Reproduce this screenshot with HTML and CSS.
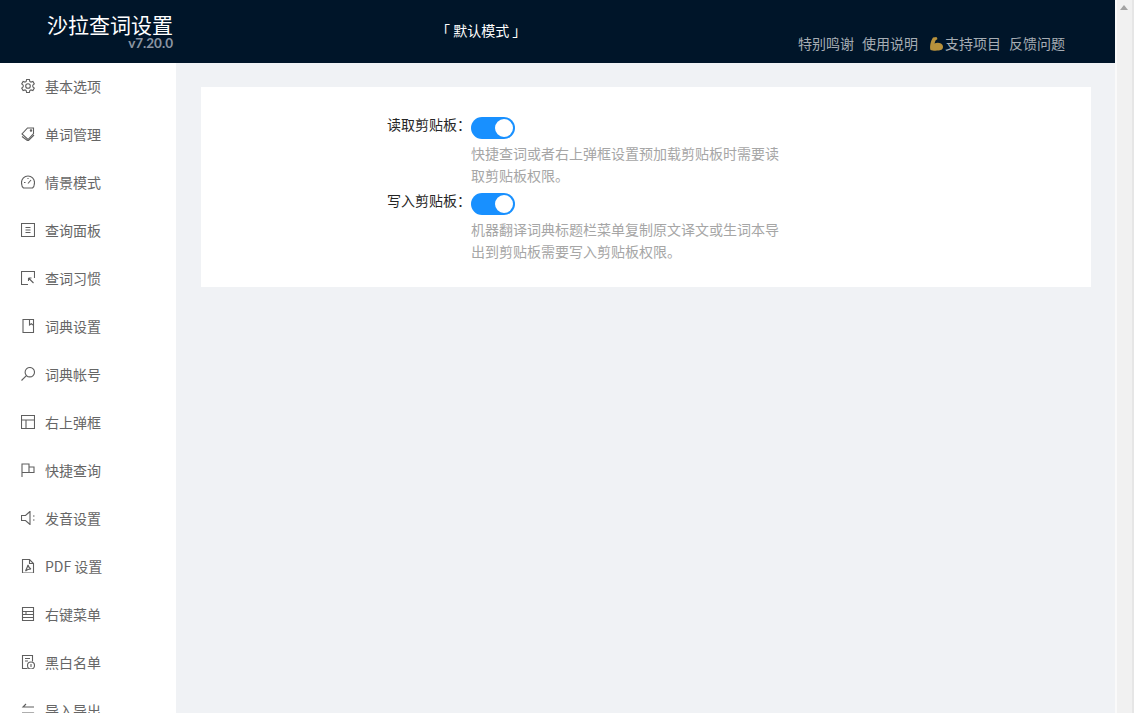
FILE: index.html
```html
<!DOCTYPE html>
<html lang="zh-CN">
<head>
<meta charset="UTF-8">
<title>沙拉查词设置</title>
<link rel="stylesheet" href="styles.css">
</head>
<body>

<div class="page">
    <header class="topbar">
        <div class="brand">
            <div class="brand-title">沙拉查词设置</div>
            <div class="brand-version">v7.20.0</div>
        </div>
        <div class="mode">「 默认模式 」</div>
        <nav class="toplinks">
            <a>特别鸣谢</a>
            <a>使用说明</a>
            <a class="support"><svg class="arm" viewBox="0 0 16 16"><path d="M5 1.500 8.500 1 9.500 3 7.500 4.500 6.500 7.500C8 6.500 11 6.300 13 7.500 15.500 9 15.500 12 14 13.500 11 15 5 15 2.500 14 1.500 11 2.500 5 5 1.500Z"/></svg>支持项目</a>
            <a>反馈问题</a>
        </nav>
    </header>

    <div class="body">
        <!-- Left menu -->
        <aside class="sidebar">
            <a class="menu-item"><svg viewBox="1 1 14 14"><path d="M6.600 1.500h2.800l.4 1.900 1.200.7 1.900-.6 1.400 2.400-1.500 1.300v1.600l1.500 1.300-1.400 2.400-1.900-.6-1.200.7-.4 1.900H6.600l-.4-1.900-1.200-.7-1.900.6-1.400-2.400 1.500-1.300V7.200L1.700 5.900l1.400-2.400 1.900.6 1.200-.7z"/><circle cx="8" cy="8" r="2.300"/></svg>基本选项</a>
            <a class="menu-item"><svg viewBox="1 1 14 14"><path d="M7.500 2h6v5.500L8 13.500l-6-5.500z"/><path d="M2 10.500 8 15l6-6"/><circle cx="11" cy="4.500" r=".7"/></svg>单词管理</a>
            <a class="menu-item"><svg viewBox="1 1 14 14"><path d="M3.500 14C2 12.800 1.500 10.500 1.500 8.500a6.500 6.500 0 0 1 13 0c0 2-.5 4.300-2 5.500z"/><path d="M8 9.500l3-3.500"/><path d="M4 8.500h1.500M8 4v1"/></svg>情景模式</a>
            <a class="menu-item"><svg viewBox="1 1 14 14"><path d="M1.500 1.500h13v13h-13z"/><path d="M5.500 5.500h5M5.500 8h5M5.500 10.500h5"/></svg>查询面板</a>
            <a class="menu-item"><svg viewBox="1 1 14 14"><path d="M8 14.500H1.500v-13h13V8"/><path d="M8.500 8l5 5M8.500 8h3M8.500 8v3"/></svg>查词习惯</a>
            <a class="menu-item"><svg viewBox="1 1 14 14"><path d="M3 1.500h10.500v13H3z"/><path d="M9.500 1.500v5.500l1.800-1.300 1.700 1.300"/></svg>词典设置</a>
            <a class="menu-item"><svg viewBox="1 1 14 14"><circle cx="9.800" cy="6.200" r="4.700"/><path d="M6.400 9.600 1.500 14.500"/></svg>词典帐号</a>
            <a class="menu-item"><svg viewBox="1 1 14 14"><path d="M1.500 1.500h13v13h-13z"/><path d="M1.500 6h13M6 6v8.500"/></svg>右上弹框</a>
            <a class="menu-item"><svg viewBox="1 1 14 14"><path d="M2 15V2h7v8.500H2"/><path d="M9 5h5v5.500H9"/></svg>快捷查询</a>
            <a class="menu-item"><svg viewBox="1 1 14 14"><path d="M10 1.500 5.500 5.500h-4v5h4l4.500 4z"/><path d="M13 6h1.500M13 10h1.500"/></svg>发音设置</a>
            <a class="menu-item"><svg viewBox="1 1 14 14"><path d="M2.500 1.500h7l4 4v9.500h-11z"/><path d="M9.500 1.500v4h4"/><path d="M8 7c.5 2 1 3 3 4-2 0-4 .5-5.500 2C6.500 11 7.500 9 8 7z"/></svg>PDF 设置</a>
            <a class="menu-item"><svg viewBox="1 1 14 14"><path d="M2.500 1.500h11v13h-11z"/><path d="M2.500 5.500h11M2.500 8.500h11M2.500 11.500h11M6 5.500v3"/></svg>右键菜单</a>
            <a class="menu-item"><svg viewBox="1 1 14 14"><path d="M7.500 14.500h-5v-13h10v6"/><path d="M5 4.500h5M5 7h3"/><circle cx="11" cy="11.500" r="3.500"/><path d="M11 10v3"/></svg>黑白名单</a>
            <a class="menu-item"><svg viewBox="1 1 14 14"><path d="M14 5H3l3-3M2 11h11l-3 3"/></svg>导入导出</a>
        </aside>

        <main class="content">
            <section class="card">
                <div class="form-row">
                    <label class="form-label">读取剪贴板：</label>
                    <div class="form-control">
                        <span class="switch"><span class="knob"></span></span>
                        <p class="help">快捷查词或者右上弹框设置预加载剪贴板时需要读取剪贴板权限。</p>
                    </div>
                </div>
                <div class="form-row">
                    <label class="form-label">写入剪贴板：</label>
                    <div class="form-control">
                        <span class="switch"><span class="knob"></span></span>
                        <p class="help">机器翻译词典标题栏菜单复制原文译文或生词本导出到剪贴板需要写入剪贴板权限。</p>
                    </div>
                </div>
            </section>
        </main>
    </div>
</div>

<!-- Page scrollbar -->
<div class="scrollbar">
    <span class="arrow-up"></span>
</div>

</body>
</html>
```

FILE: styles.css
```css
html, body {
    height: 100%;
}
body {
    margin: 0;
    display: flex;
    overflow: hidden;
    font-family: "Noto Sans CJK SC", "Liberation Sans", sans-serif;
    font-size: 14px;
    background-color: #f0f2f5;
}
.page {
    flex: 1;
    min-width: 0;
    display: flex;
    flex-direction: column;
}
.topbar {
    height: 63px;
    flex: none;
    display: flex;
    background-color: #001529;
}
.brand {
    width: 173px;
    flex: none;
    text-align: right;
}
.brand-title {
    margin-top: 11px;
    font-size: 21px;
    line-height: 26px;
    color: #fff;
}
.brand-version {
    font-family: Lato, "Liberation Sans", sans-serif;
    font-size: 13.500px;
    font-weight: bold;
    line-height: 12px;
    color: #8a94a2;
}
.mode {
    margin-left: 263px;
    margin-top: 18px;
    line-height: 24px;
    color: #fff;
}
.toplinks {
    margin-left: auto;
    margin-right: 50px;
    margin-top: 31px;
    display: flex;
    gap: 8px;
    line-height: 24px;
    color: #a6adb4;
}
.support {
    margin-left: 2px;
}
.arm {
    width: 16px;
    height: 16px;
    margin-right: 1px;
    vertical-align: -3px;
    fill: #b8923c;
}
.body {
    flex: 1;
    min-height: 0;
    display: flex;
}
.sidebar {
    width: 176px;
    flex: none;
    padding-top: 3px;
    background: #fff;
    overflow: hidden;
}
.menu-item {
    height: 40px;
    margin-bottom: 8px;
    padding-left: 21px;
    display: flex;
    align-items: center;
    gap: 10px;
    color: #666;
}
.menu-item svg {
    width: 14px;
    height: 14px;
    flex: none;
    fill: none;
    stroke: #5f5f5f;
    stroke-width: 1.1;
}
.content {
    flex: 1;
    padding: 24px 24px 24px 25px;
}
.card {
    height: 200px;
    box-sizing: border-box;
    padding-top: 24px;
    background: #fff;
}
.form-row {
    display: flex;
}
.form-label {
    width: 270px;
    height: 28px;
    flex: none;
    margin-top: -3px;
    text-align: right;
    line-height: 32px;
    color: #262626;
}
.form-control {
    width: 312px;
}
.switch {
    display: block;
    position: relative;
    width: 44px;
    height: 22px;
    margin-top: 6px;
    border-radius: 11px;
    background-color: #1890ff;
}
.knob {
    position: absolute;
    top: 2px;
    right: 2px;
    width: 18px;
    height: 18px;
    border-radius: 50%;
    background: #fff;
}
.help {
    margin: 2.500px 0 .5px;
    line-height: 22.500px;
    color: #a6a6a6;
}
.scrollbar {
    width: 19px;
    flex: none;
    position: relative;
    box-sizing: border-box;
    border-left: 2px solid #fafafa;
    border-right: 2px solid #e6e6e6;
    background: #f1f1f1;
}
.arrow-up {
    position: absolute;
    top: 5px;
    left: 3px;
    border: 4px solid transparent;
    border-top: 0;
    border-bottom: 5px solid #a3a3a3;
}
```
